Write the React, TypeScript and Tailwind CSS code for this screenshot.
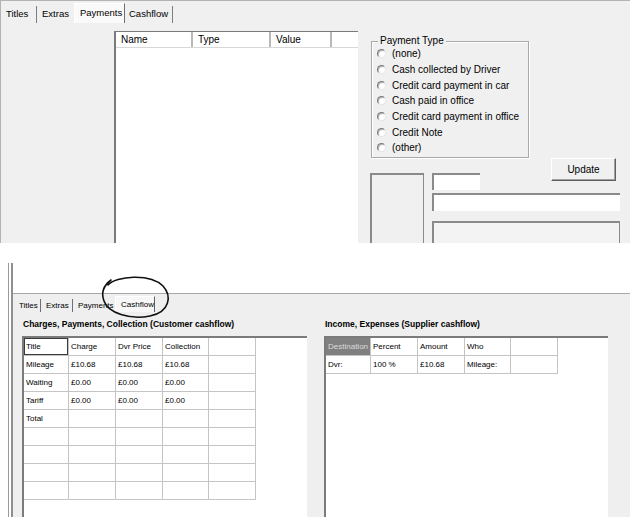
import React from "react";

const paymentTypes = [
  "(none)",
  "Cash collected by Driver",
  "Credit card payment in car",
  "Cash paid in office",
  "Credit card payment in office",
  "Credit Note",
  "(other)",
];

const chargeRows = [
  ["Title", "Charge", "Dvr Price", "Collection", ""],
  ["Mileage", "£10.68", "£10.68", "£10.68", ""],
  ["Waiting", "£0.00", "£0.00", "£0.00", ""],
  ["Tariff", "£0.00", "£0.00", "£0.00", ""],
  ["Total", "", "", "", ""],
  ["", "", "", "", ""],
  ["", "", "", "", ""],
  ["", "", "", "", ""],
  ["", "", "", "", ""],
];

const supplierRows = [
  ["Destination", "Percent", "Amount", "Who", ""],
  ["Dvr:", "100 %", "£10.68", "Mileage:", ""],
];

const Radio = ({ label }: { label: string }) => (
  <div className="h-[15.7px] flex items-center">
    <span className="ml-[5px] w-[9px] h-[9px] rounded-full bg-white border border-t-[#7a7a7a] border-l-[#7a7a7a] border-r-[#e4e4e4] border-b-[#e4e4e4] shadow-[inset_1px_1px_0_#b0b0b0]" />
    <span className="ml-[6px]">{label}</span>
  </div>
);

const Grid = ({ rows, first }: { rows: string[][]; first: "focus" | "dark" }) => (
  <div className="grid grid-cols-[45px_47px_47px_46px_47px] w-[232px] text-[8px]">
    {rows.map((row, r) =>
      row.map((cell, c) => {
        let extra = "";
        if (r === 0 && c === 0) {
          extra =
            first === "focus"
              ? "shadow-[inset_0_0_0_1px_#3a3a3a]"
              : "bg-[#808080] text-[#dcdcdc]";
        }
        return (
          <div
            key={`${r}-${c}`}
            className={`h-[18px] pl-[2px] flex items-center border-r border-b border-[#c4c4c4] ${extra}`}
          >
            {cell}
          </div>
        );
      })
    )}
  </div>
);

const App = () => {
  return (
    <div className="relative w-[630px] h-[517px] overflow-hidden bg-white text-black font-['Liberation_Sans',Arial,sans-serif] flex flex-col">
      {/* upper screenshot: Payments tab */}
      <section className="h-[243px] shrink-0 bg-[#f0f0f0] border-t border-l border-[#b4b4b4] flex flex-col text-[10px]">
        <div className="h-[22px] flex items-end pl-[3px] text-[9.5px]">
          <div className="h-[17px] w-[33px] pl-[2px] border-r border-[#7d7d7d] flex items-center">Titles</div>
          <div className="h-[17px] w-[37px] pl-[5px] flex items-center">Extras</div>
          <div className="h-[20px] w-[51px] pl-[5px] bg-[#fafafa] border-t border-l border-white border-r border-r-[#6e6e6e] flex items-center">
            Payments
          </div>
          <div className="h-[17px] w-[48px] pl-[4px] border-r border-[#7d7d7d] flex items-center">Cashflow</div>
        </div>

        <div className="flex flex-1 min-h-0">
          <div className="w-[113px] shrink-0" />

          {/* list view */}
          <div className="w-[244px] shrink-0 mt-[8px] bg-white border-t border-l-2 border-[#7a7a7a]">
            <div className="flex h-[16px] border-b border-[#d8d8d8]">
              <div className="w-[77px] pl-[5px] border-r-2 border-[#b8b8b8] flex items-center">Name</div>
              <div className="w-[78px] pl-[5px] border-r-2 border-[#b8b8b8] flex items-center">Type</div>
              <div className="w-[61px] pl-[5px] border-r-2 border-[#b8b8b8] flex items-center">Value</div>
              <div className="flex-1" />
            </div>
          </div>

          {/* right side */}
          <div className="flex-1 flex flex-col pl-[13px]">
            <div className="relative mt-[18px] w-[158px] h-[117px] border border-[#a9a9a9] shadow-[inset_1px_1px_0_#ffffff,1px_1px_0_#ffffff] pt-[4px]">
              <span className="absolute -top-[7px] left-[6px] px-[2px] bg-[#f0f0f0] leading-[12px]">Payment Type</span>
              {paymentTypes.map((t) => (
                <Radio key={t} label={t} />
              ))}
            </div>

            <div className="flex flex-1 gap-[8px] -ml-[1px]">
              <div className="w-[54px] mt-[15px] border-t-2 border-l-2 border-r border-[#8a8a8a]" />
              <div className="w-[188px] flex flex-col">
                <div className="flex items-start justify-between">
                  <div className="mt-[15px] w-[48px] h-[17px] bg-white border-t-2 border-l-2 border-[#8a8a8a]" />
                  <button className="w-[65px] h-[23px] mr-[4px] bg-[#f0f0f0] border border-t-white border-l-white border-r-[#5f5f5f] border-b-[#5f5f5f] shadow-[inset_-1px_-1px_0_#a0a0a0] text-[10px]">
                    Update
                  </button>
                </div>
                <div className="mt-[3px] h-[18px] bg-white border-t-2 border-l-2 border-[#8a8a8a]" />
                <div className="mt-[10px] flex-1 bg-[#f3f3f3] border-t-2 border-l-2 border-r border-[#8a8a8a]" />
              </div>
            </div>
          </div>
        </div>
      </section>

      {/* lower screenshot: Cashflow tab */}
      <section className="flex-1 flex flex-col pt-[20px] pl-[8px]">
        <div className="flex-1 flex border-l border-[#9a9a9a] pl-[2px]">
          <div className="flex-1 flex flex-col border-l-2 border-[#8f8f8f]">
            <div className="h-[30px] shrink-0" />
            <div className="flex-1 flex flex-col bg-[#efefef] border-t border-[#a8a8a8]">
              <div className="h-[18px] flex items-end pl-[2px] text-[8px]">
                <div className="h-[13px] w-[26px] pl-[4px] border-r border-[#6f6f6f] flex items-center">Titles</div>
                <div className="h-[13px] w-[32px] pl-[5px] border-r border-[#6f6f6f] flex items-center">Extras</div>
                <div className="h-[13px] w-[42px] pl-[5px] flex items-center">Payments</div>
                <div className="h-[16px] w-[40px] pl-[5px] bg-[#f7f7f7] border-t border-l border-white border-r border-r-[#5f5f5f] flex items-center">
                  Cashflow
                </div>
              </div>

              <div className="flex-1 flex gap-[17px] pl-[9px]">
                <div className="w-[285px] flex flex-col">
                  <div className="h-[24px] flex items-center pl-[1px] font-bold text-[8.5px]">
                    Charges, Payments, Collection (Customer cashflow)
                  </div>
                  <div className="flex-1 bg-white border-t-2 border-l-2 border-[#7b7b7b]">
                    <Grid rows={chargeRows} first="focus" />
                  </div>
                </div>
                <div className="w-[284px] flex flex-col">
                  <div className="h-[24px] flex items-center pl-[1px] font-bold text-[8.5px]">
                    Income, Expenses (Supplier cashflow)
                  </div>
                  <div className="flex-1 bg-white border-t-2 border-l-2 border-[#7b7b7b]">
                    <Grid rows={supplierRows} first="dark" />
                  </div>
                </div>
              </div>
            </div>
          </div>
        </div>
      </section>

      {/* hand-drawn circle around the Cashflow tab */}
      <svg className="absolute left-0 top-0 pointer-events-none" width="630" height="517" viewBox="0 0 630 517">
        <path
          d="M108 285 C 116 276, 150 273, 163 286 C 172 296, 170 312, 150 316 C 130 320, 108 313, 104 301 C 101 293, 103 286, 111 280"
          fill="none"
          stroke="#111"
          strokeWidth="1.6"
          strokeLinecap="round"
        />
      </svg>
    </div>
  );
};

export default App;
